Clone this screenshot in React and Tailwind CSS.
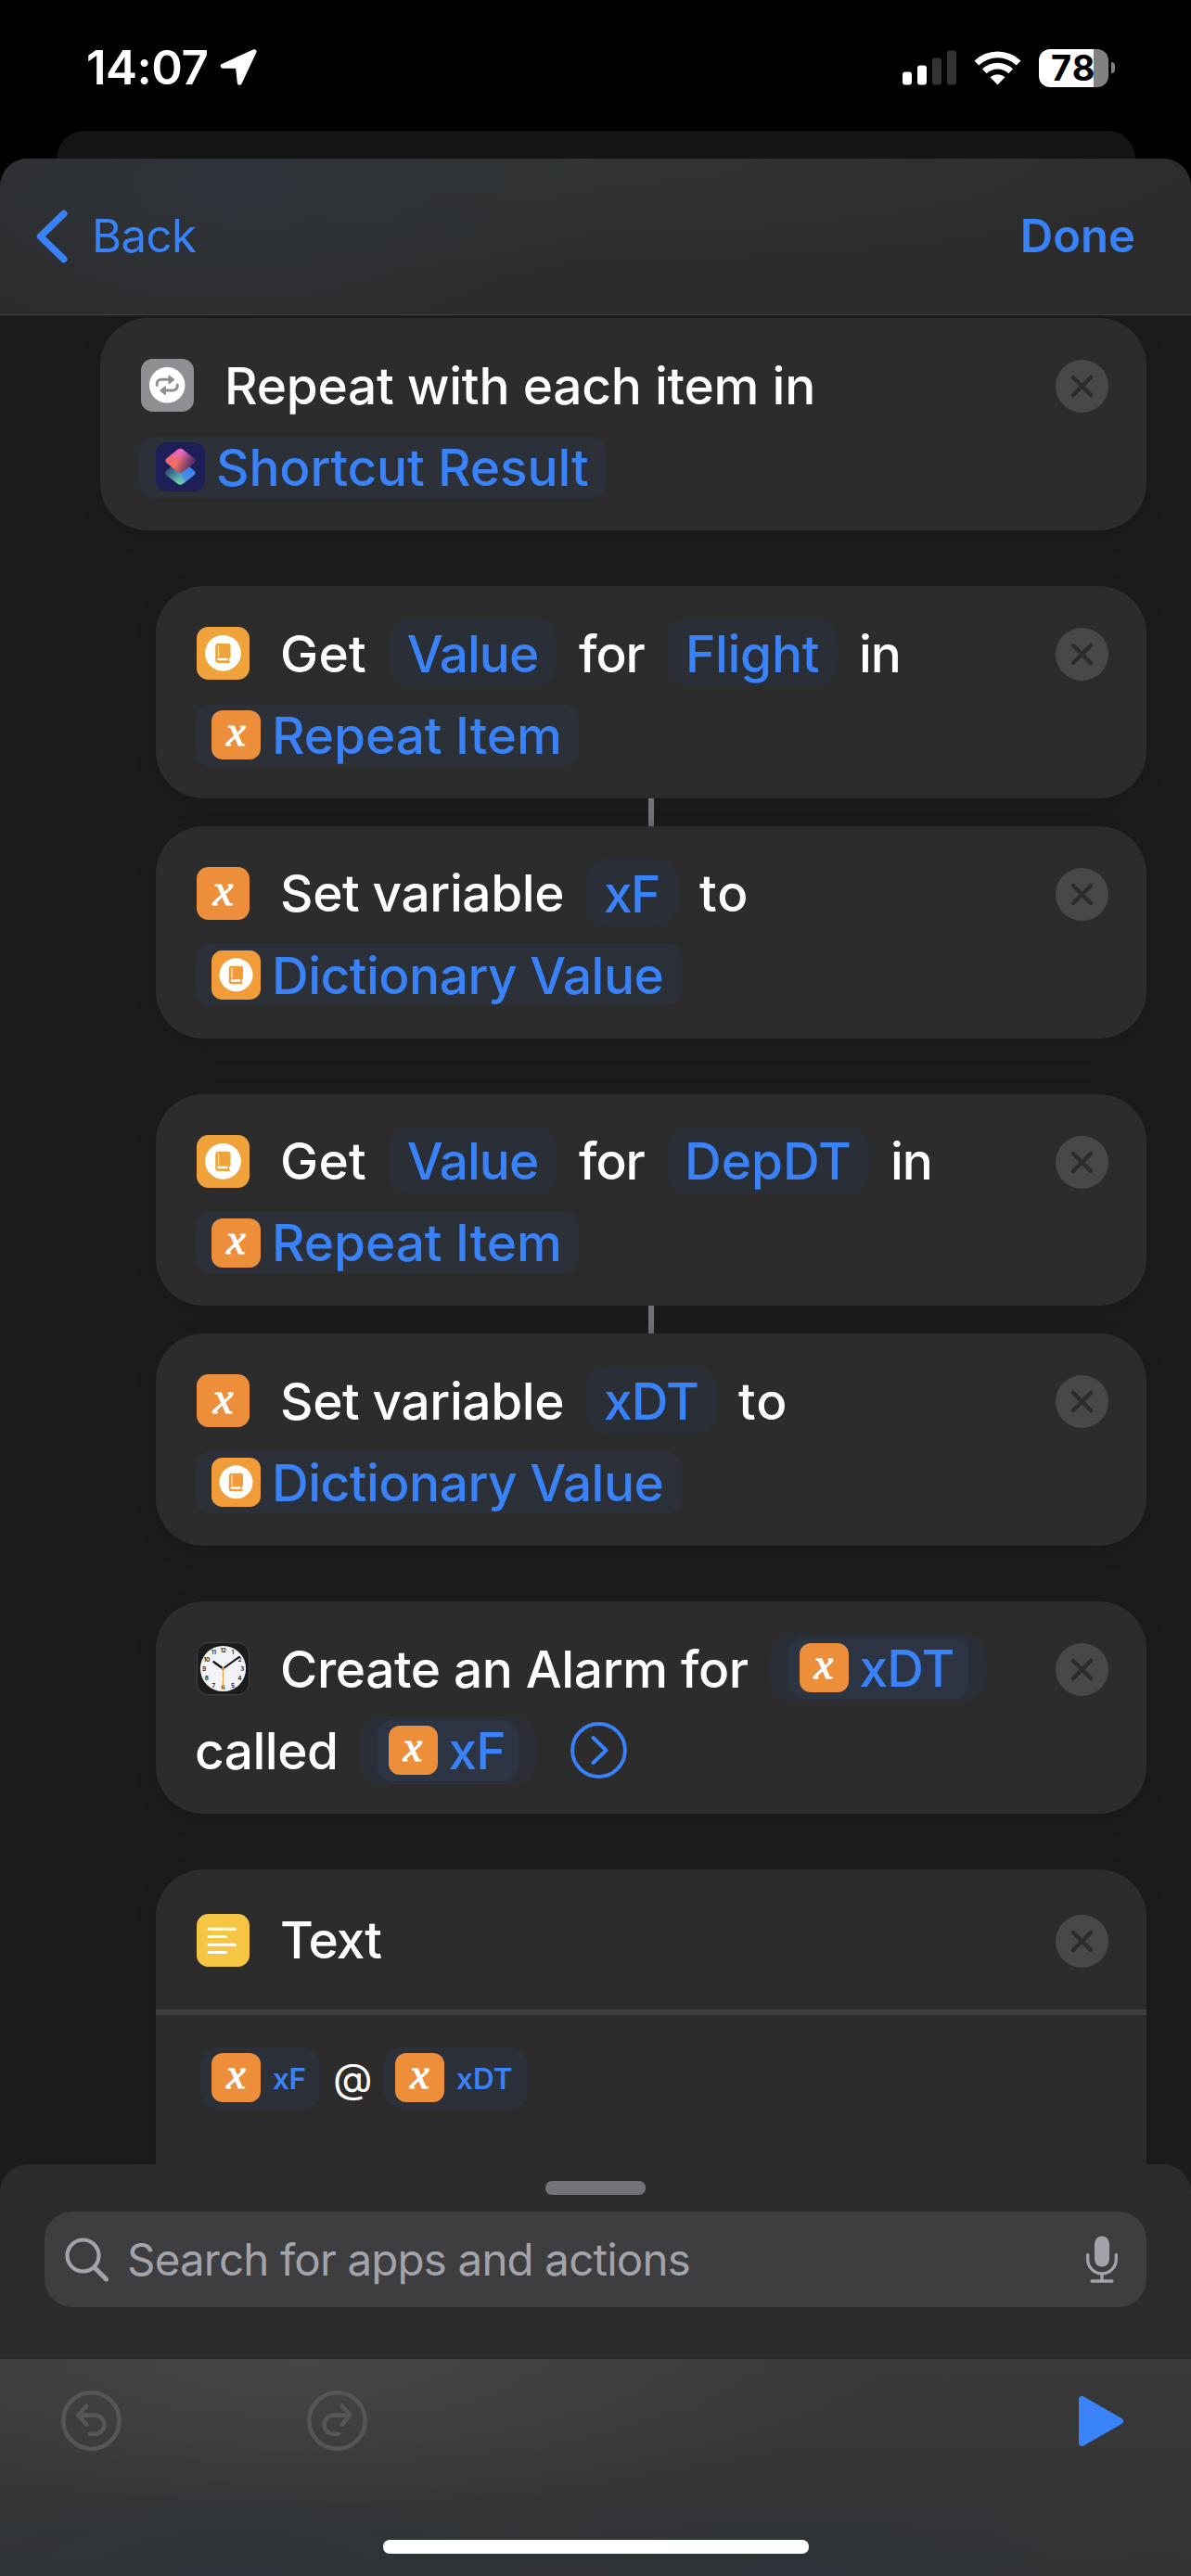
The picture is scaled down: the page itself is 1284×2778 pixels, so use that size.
import React from "react";

const BLUE = "#3a82f7";

/* ---------- icons ---------- */

function LoopIcon() {
  return (
    <svg className="size-[57px] shrink-0" viewBox="0 0 57 57">
      <rect width="57" height="57" rx="12.5" fill="#8e8e93" />
      <circle cx="28.2" cy="28.3" r="19.3" fill="#fff" />
      <g fill="none" stroke="#8e8e93" strokeWidth="3" strokeLinecap="round" strokeLinejoin="round">
        <path d="M17.2 28.3v-1.400a4.600 4.600 0 0 1 4.600-4.600h8" />
        <path d="M39.200 28v1.400a4.600 4.600 0 0 1-4.600 4.600h-8" />
      </g>
      <path d="M30.200 18.200v8.400l5.200-4.200zM26.200 30v8.400l-5.200-4.200z" fill="#8e8e93" stroke="#8e8e93" strokeWidth="1.400" strokeLinejoin="round" />
    </svg>
  );
}

function DictIcon({ small }) {
  const color = small ? "#f19c38" : "#f0a33b";
  return (
    <svg className={small ? "size-[53px] shrink-0" : "size-[57px] shrink-0"} viewBox="0 0 57 57">
      <rect width="57" height="57" rx="12.5" fill={color} />
      <circle cx="28.5" cy="28.3" r="19.4" fill="#fff" />
      <path d="M23.6 18h10.6q2.4 0 2.4 2.4v11.8q0 1.4-1.5 2v2.6l1.2 1.7q-.6.6-1.7.6H23.8a3.6 3.6 0 0 1-3.6-3.6V21.400q0-3.400 3.400-3.400z" fill={color} />
      <path d="M23.600 20.500v11.400" stroke="#fff" strokeWidth="1" strokeLinecap="round" />
      <path d="M23.500 33.700h10v2.600h-10a1.300 1.300 0 0 1 0-2.600z" fill="#fff" />
    </svg>
  );
}

function VarIcon({ small }) {
  return small ? (
    <span className="flex size-[53px] shrink-0 items-center justify-center rounded-[12px] bg-[#ed8f3a] pb-[7px] font-['Liberation_Serif',serif] text-[46px] leading-none font-normal text-white italic [-webkit-text-stroke:1.2px_white]">
      x
    </span>
  ) : (
    <span className="flex size-[57px] shrink-0 items-center justify-center rounded-[12.5px] bg-[#ed8f3a] pb-[7px] font-['Liberation_Serif',serif] text-[49px] leading-none font-normal text-white italic [-webkit-text-stroke:1.2px_white]">
      x
    </span>
  );
}

function ShortcutsIcon() {
  return (
    <svg className="size-[53px] shrink-0" viewBox="0 0 53 53">
      <defs>
        <linearGradient id="scTop" x1="0.6" y1="0" x2="0.3" y2="1">
          <stop offset="0" stopColor="#ea66d8" />
          <stop offset="0.55" stopColor="#ee6a6c" />
          <stop offset="1" stopColor="#f0705a" />
        </linearGradient>
        <linearGradient id="scShade" x1="0.45" y1="0.4" x2="0.98" y2="0.6">
          <stop offset="0" stopColor="#1e1e58" stopOpacity="0" />
          <stop offset="1" stopColor="#1e1e58" stopOpacity="0.85" />
        </linearGradient>
        <linearGradient id="scBottom" x1="0.85" y1="0.2" x2="0.35" y2="0.95">
          <stop offset="0" stopColor="#3a7bf6" />
          <stop offset="0.4" stopColor="#4a94dc" />
          <stop offset="1" stopColor="#6ed69a" />
        </linearGradient>
        <linearGradient id="scShade2" x1="0.6" y1="0.5" x2="0.1" y2="0.25">
          <stop offset="0" stopColor="#1e1e58" stopOpacity="0" />
          <stop offset="1" stopColor="#1e1e58" stopOpacity="0.7" />
        </linearGradient>
      </defs>
      <rect width="53" height="53" rx="12" fill="#1e1e58" />
      <path d="M29.300 20.600l11.800 9.800q2.800 2.500 0 5l-11.800 9.400q-2.900 2-5.800 0l-11.800-9.400q-2.800-2.500 0-5l11.800-9.800q2.900-2 5.800 0z" fill="url(#scBottom)" />
      <path d="M29.300 20.600l11.800 9.800q2.800 2.500 0 5l-11.800 9.400q-2.900 2-5.800 0l-11.800-9.400q-2.800-2.500 0-5l11.800-9.800q2.900-2 5.800 0z" fill="url(#scShade2)" />
      <path d="M29.300 7.800l11.800 9.400q2.800 2.500 0 5l-11.800 9.800q-2.900 2-5.800 0l-11.800-9.800q-2.800-2.500 0-5l11.800-9.400q2.900-2 5.800 0z" fill="url(#scTop)" />
      <path d="M29.300 7.800l11.800 9.400q2.800 2.500 0 5l-11.800 9.800q-2.900 2-5.800 0l-11.800-9.800q-2.800-2.500 0-5l11.800-9.400q2.900-2 5.800 0z" fill="url(#scShade)" />
      <path d="M41.100 30.400q2.800 2.500 0 5l-9 7.200q-4-4-5.600-9.800q1.800 0 2.800-.8l4.600-3.800q3 .2 4.600.2z" fill="#3a80f6" opacity="0.55" />
    </svg>
  );
}

function ClockIcon() {
  const hours = [12, 1, 2, 3, 4, 5, 6, 7, 8, 9, 10, 11];
  return (
    <svg className="size-[57px] shrink-0" viewBox="0 0 57 57">
      <rect x="0.500" y="0.500" width="56" height="56" rx="12.500" fill="#1b1b1b" stroke="#414141" strokeWidth="1" />
      <circle cx="28.500" cy="28.500" r="24.600" fill="#f3f3f7" />
      {hours.map((h, i) => (
        <text
          key={h}
          x={28.5 + 20.6 * Math.sin((i * Math.PI) / 6)}
          y={31 - 20.4 * Math.cos((i * Math.PI) / 6)}
          textAnchor="middle"
          fontSize="6.500"
          fontWeight="600"
          fontFamily="Inter, sans-serif"
          letterSpacing="-0.300"
          fill="#222"
        >
          {h}
        </text>
      ))}
      <g strokeLinecap="round">
        <path d="M28.500 28.500L18.400 21.200" stroke="#111" strokeWidth="2.300" />
        <path d="M28.500 28.500L46 15.900" stroke="#111" strokeWidth="2" />
        <path d="M28.500 28.500V50.500" stroke="#f0a437" strokeWidth="1.200" />
      </g>
      <circle cx="28.500" cy="28.500" r="1.700" fill="#d9932f" />
    </svg>
  );
}

function NoteIcon() {
  return (
    <svg className="size-[57px] shrink-0" viewBox="0 0 57 57">
      <rect width="57" height="57" rx="12.500" fill="#f5c543" />
      <path d="M13 16.200h28.500M13 24.600h18.500M13 33.200h28.500M13 41.500h18.500" stroke="#fff" strokeWidth="3" strokeLinecap="round" />
    </svg>
  );
}

function CloseButton() {
  return (
    <button className="mt-1 ml-auto size-[57px] shrink-0" aria-label="Remove">
      <svg viewBox="0 0 57 57">
        <circle cx="28.500" cy="28.500" r="28.500" fill="#48484a" />
        <path d="M19 19l19 19M38 19l-19 19" stroke="#2c2c2c" strokeWidth="4.400" strokeLinecap="round" />
      </svg>
    </button>
  );
}

/* ---------- text pieces ---------- */

function Word({ className = "", children }) {
  return <span className={`shrink-0 pt-[3px] leading-[67px] whitespace-nowrap ${className}`}>{children}</span>;
}

function Pill({ className, children }) {
  return (
    <span className={`flex h-[73px] shrink-0 items-center justify-center rounded-[24px] bg-[#2a2f37] pt-[3px] whitespace-nowrap text-[#3a82f7] ${className}`}>
      {children}
    </span>
  );
}

function Token({ icon, className, children }) {
  return (
    <span className={`-ml-0.5 flex h-[66px] shrink-0 items-center gap-3 rounded-[15px] bg-[#2c3039] pl-[18px] whitespace-nowrap text-[#3a82f7] ${className}`}>
      {icon}
      <span className="pt-px">{children}</span>
    </span>
  );
}

function NestedToken({ outer, inner, children }) {
  return (
    <span className={`flex h-[73px] shrink-0 items-center justify-center rounded-[24px] bg-[#2a2f37] ${outer}`}>
      <span className={`flex h-[66px] items-center gap-[12px] rounded-[17px] bg-[#2d3544] pl-3 text-[#3a82f7] ${inner}`}>
        <VarIcon small />
        <span className="pt-[2px] tracking-[-0.8px]">{children}</span>
      </span>
    </span>
  );
}

/* ---------- cards ---------- */

function Card({ icon, first, second, nested = true }) {
  return (
    <section
      className={`flex h-[228.7px] shrink-0 flex-col gap-4 rounded-[51px] bg-[#2c2c2c] pt-[35px] pr-[41px] pl-11 shadow-[0_6px_18px_rgba(24,24,30,0.5)] ${
        nested ? "ml-[168px] w-[1068px]" : "ml-[108px] w-[1128px]"
      }`}
    >
      <div className="flex h-[73px] items-center">
        <span className="mt-0.5 mr-[33px]">{icon}</span>
        {first}
        <CloseButton />
      </div>
      <div className="flex h-[73px] items-center">{second}</div>
    </section>
  );
}

function GetValueCard({ field }) {
  return (
    <Card
      icon={<DictIcon />}
      first={
        <>
          <Word className="w-[117px] tracking-[0.3px]">Get</Word>
          <Pill className="w-[181px] tracking-[-1px]">Value</Pill>
          <Word className="ml-6 w-[95px] tracking-[-1px]">for</Word>
          {field}
          <Word className="ml-[23px] tracking-[-1px]">in</Word>
        </>
      }
      second={
        <Token icon={<VarIcon small />} className="w-[414px] tracking-[-0.1px]">
          Repeat Item
        </Token>
      }
    />
  );
}

function SetVariableCard({ name }) {
  return (
    <Card
      icon={<VarIcon />}
      first={
        <>
          <Word className="w-[329px] tracking-[-0.4px]">Set variable</Word>
          {name}
          <Word className="ml-[23px] tracking-[1px]">to</Word>
        </>
      }
      second={
        <Token icon={<DictIcon small />} className="w-[525px] tracking-[-0.5px]">
          Dictionary Value
        </Token>
      }
    />
  );
}

function Gap() {
  return <div className="h-[60.1px] shrink-0" />;
}

function Connector() {
  return <div className="ml-[699px] h-[30px] w-1.5 shrink-0 bg-[#717277]" />;
}

/* ---------- chrome ---------- */

function StatusBar() {
  return (
    <div className="flex h-[141px] shrink-0 items-center pt-[5px] pr-[82px] pl-[93px] text-white">
      <span className="text-[51px] font-semibold tracking-[-0.5px]">14:07</span>
      <svg className="ml-[13px] h-10 w-10" viewBox="0 0 40 40">
        <path d="M37 2.700L3.200 18.200H19.400L21.300 36.200z" fill="#fff" stroke="#fff" strokeWidth="5" strokeLinejoin="round" />
      </svg>
      <svg className="ml-auto h-[38px] w-[58px]" viewBox="0 0 58 38">
        <rect x="0" y="23.500" width="10" height="14" rx="3" fill="#fff" />
        <rect x="16" y="16.500" width="10" height="21" rx="3" fill="#fff" />
        <rect x="32" y="8.500" width="10" height="29" rx="3" fill="#333" />
        <rect x="48" y="0.500" width="10" height="37" rx="3" fill="#333" />
      </svg>
      <svg className="ml-[19px] h-[38px] w-[51px]" viewBox="0 0 51 38">
        <path d="M0.500 11.500A36 36 0 0 1 50.500 11.500L45.800 16.400A29.500 29.500 0 0 0 5.200 16.400Z" fill="#fff" />
        <path d="M9 20.400A24 24 0 0 1 42 20.400L37.300 25.200A17.500 17.500 0 0 0 13.700 25.200Z" fill="#fff" />
        <path d="M17.500 29.200A12 12 0 0 1 33.500 29.200L25.500 37.500Z" fill="#fff" />
      </svg>
      <div className="ml-[19px] flex h-[41px] w-[75px] items-center rounded-[12px] bg-linear-to-r from-white from-79% to-[#818181] to-79% pl-[13px]">
        <span className="text-[38px] leading-none font-bold tracking-[1.2px] text-black">78</span>
      </div>
      <span className="ml-[3px] h-3 w-1 rounded-r-full bg-[#818181]" />
    </div>
  );
}

function NavBar() {
  return (
    <header className="flex h-[169px] shrink-0 items-center justify-between rounded-t-[30px] border-b border-[#404041] bg-[#2b2b2b] bg-[radial-gradient(ellipse_420px_200px_at_250px_30px,#2f343b,transparent),radial-gradient(ellipse_760px_130px_at_650px_0px,#323434,transparent)] pr-[60px] pl-[39px] text-[49px] text-[#3a82f7]">
      <div className="flex items-center">
        <svg className="h-[58px] w-[34px]" viewBox="0 0 34 58">
          <path d="M29.800 4.500L4.500 29L29.800 53.500" fill="none" stroke={BLUE} strokeWidth="7.400" strokeLinecap="round" strokeLinejoin="round" />
        </svg>
        <span className="ml-[26px] tracking-[-0.5px]">Back</span>
      </div>
      <span className="font-semibold">Done</span>
    </header>
  );
}

function TextCard() {
  return (
    <section className="ml-[168px] h-[400px] w-[1068px] shrink-0 rounded-[51px] bg-[#2c2c2c] shadow-[0_6px_18px_rgba(24,24,30,0.5)]">
      <div className="flex h-[151px] items-center pr-[41px] pl-11">
        <span className="mt-0.5 mr-[33px]">
          <NoteIcon />
        </span>
        <Word className="tracking-[-1px]">Text</Word>
        <CloseButton />
      </div>
      <div className="h-1.5 bg-[#3d3d3f]" />
      <div className="flex items-center pt-[35px] pl-12 text-[31.5px] text-[#3a82f7]">
        <span className="flex h-[66px] w-[129px] items-center gap-[13px] rounded-[19px] bg-[#2c3039] pl-3">
          <VarIcon small />
          <span className="pt-0.5 font-semibold tracking-[-0.4px]">xF</span>
        </span>
        <span className="ml-[14px] w-[55px] text-[44px] leading-[66px] font-normal text-white">@</span>
        <span className="flex h-[66px] w-[155px] items-center gap-[13px] rounded-[19px] bg-[#2c3039] pl-3">
          <VarIcon small />
          <span className="pt-0.5 font-semibold">xDT</span>
        </span>
      </div>
    </section>
  );
}

function SearchSheet() {
  return (
    <div className="flex h-[210px] shrink-0 flex-col items-center rounded-t-[30px] border-b border-[#262626] bg-[#2c2c2c] pt-[18px]">
      <div className="h-[15px] w-[108px] rounded-[7px] bg-[#737378]" />
      <div className="mt-[18px] flex h-[103px] w-[1188px] items-center rounded-[30px] bg-[#3e3e40] pr-[31px] pl-[22px] text-[47.5px] text-[#a3a3ab]">
        <svg className="h-[48px] w-[48px]" viewBox="0 0 48 48">
          <circle cx="19.500" cy="19.500" r="17" fill="none" stroke="#a3a3ab" strokeWidth="4.200" />
          <path d="M32 32.500L44.500 45" stroke="#a3a3ab" strokeWidth="5" strokeLinecap="round" />
        </svg>
        <span className="ml-[19px] tracking-[-0.85px]">Search for apps and actions</span>
        <svg className="ml-auto h-[51px] w-[34px]" viewBox="0 0 34 51">
          <rect x="9" y="0.500" width="16" height="33" rx="8" fill="#a3a3ab" />
          <path d="M1.700 20.500V25.500a15.300 15.300 0 0 0 30.600 0V20.500M17 41V48M6 49H28" fill="none" stroke="#a3a3ab" strokeWidth="3.300" strokeLinecap="round" />
        </svg>
      </div>
    </div>
  );
}

function UndoIcon({ flip }) {
  return (
    <svg className={flip ? "size-[65px] -scale-x-100" : "size-[65px]"} viewBox="0 0 65 65" fill="none" stroke="#565656" strokeWidth="4.600" strokeLinecap="round" strokeLinejoin="round">
      <circle cx="32.500" cy="32.500" r="30.200" />
      <path d="M27.300 16.800L18.300 26.500L27.300 36.500M18.800 26.700H36.500a10 10 0 0 1 0 20H31" />
    </svg>
  );
}

function Toolbar() {
  return (
    <footer className="flex h-[234px] shrink-0 flex-col items-center bg-[#333435] bg-[radial-gradient(ellipse_620px_170px_at_330px_0px,#464648,transparent),radial-gradient(ellipse_420px_130px_at_250px_234px,#2f343b,transparent),radial-gradient(ellipse_420px_130px_at_860px_234px,#2f333a,transparent),linear-gradient(#39393a,#323333)]">
      <div className="mt-[34px] flex h-[65px] w-full items-center pr-[72px] pl-[66px]">
        <UndoIcon />
        <span className="ml-[200px]">
          <UndoIcon flip />
        </span>
        <svg className="ml-auto h-[56px] w-[50px]" viewBox="0 0 50 56">
          <path d="M4.500 4.500V51.500L45.500 28z" fill={BLUE} stroke={BLUE} strokeWidth="7" strokeLinejoin="round" />
        </svg>
      </div>
      <div className="mt-24 h-[15px] w-[459px] rounded-[7px] bg-white" />
    </footer>
  );
}

export default function App() {
  return (
    <div className="flex h-[2778px] w-[1284px] flex-col overflow-hidden bg-black font-['Inter',sans-serif]">
      <StatusBar />
      <div className="-mb-[30px] h-[60px] shrink-0 px-[60.5px]">
        <div className="h-full rounded-t-[30px] bg-[#141414]" />
      </div>
      <NavBar />
      <div className="flex h-[1994px] shrink-0 flex-col bg-[#1c1c1c]">
        <main className="-mb-[30px] flex h-[2024px] flex-col overflow-hidden bg-[#1c1c1c] pt-[3.4px] text-[55px] font-medium text-white">
          <Card
            nested={false}
            icon={<LoopIcon />}
            first={<Word className="tracking-[-0.25px]">Repeat with each item in</Word>}
            second={
              <Token icon={<ShortcutsIcon />} className="w-[504px] tracking-[-0.15px]">
                Shortcut Result
              </Token>
            }
          />
          <Gap />
          <GetValueCard field={<Pill className="w-[184px] tracking-[-0.3px]">Flight</Pill>} />
          <Connector />
          <SetVariableCard name={<Pill className="w-[100px] tracking-[-1.5px]">xF</Pill>} />
          <Gap />
          <GetValueCard field={<Pill className="w-[218px]">DepDT</Pill>} />
          <Connector />
          <SetVariableCard name={<Pill className="w-[142px] tracking-[-0.8px]">xDT</Pill>} />
          <Gap />
          <Card
            icon={<ClockIcon />}
            first={
              <>
                <Word className="w-[528px] tracking-[-0.4px]">Create an Alarm for</Word>
                <NestedToken outer="w-[233px]" inner="w-[194px]">
                  xDT
                </NestedToken>
              </>
            }
            second={
              <>
                <Word className="-ml-0.5 -mt-0.5 w-[177px] tracking-[-0.5px]">called</Word>
                <NestedToken outer="w-[191px]" inner="w-[152px]">
                  xF
                </NestedToken>
                <svg className="ml-[37px] size-[61px]" viewBox="0 0 61 61" fill="none" stroke={BLUE} strokeWidth="4" strokeLinecap="round" strokeLinejoin="round">
                  <circle cx="30.500" cy="30.500" r="28.400" />
                  <path d="M24.500 17L38.500 30.500L24.500 44" />
                </svg>
              </>
            }
          />
          <Gap />
          <TextCard />
        </main>
      </div>
      <div className="relative flex shrink-0 flex-col">
        <SearchSheet />
        <Toolbar />
      </div>
    </div>
  );
}
